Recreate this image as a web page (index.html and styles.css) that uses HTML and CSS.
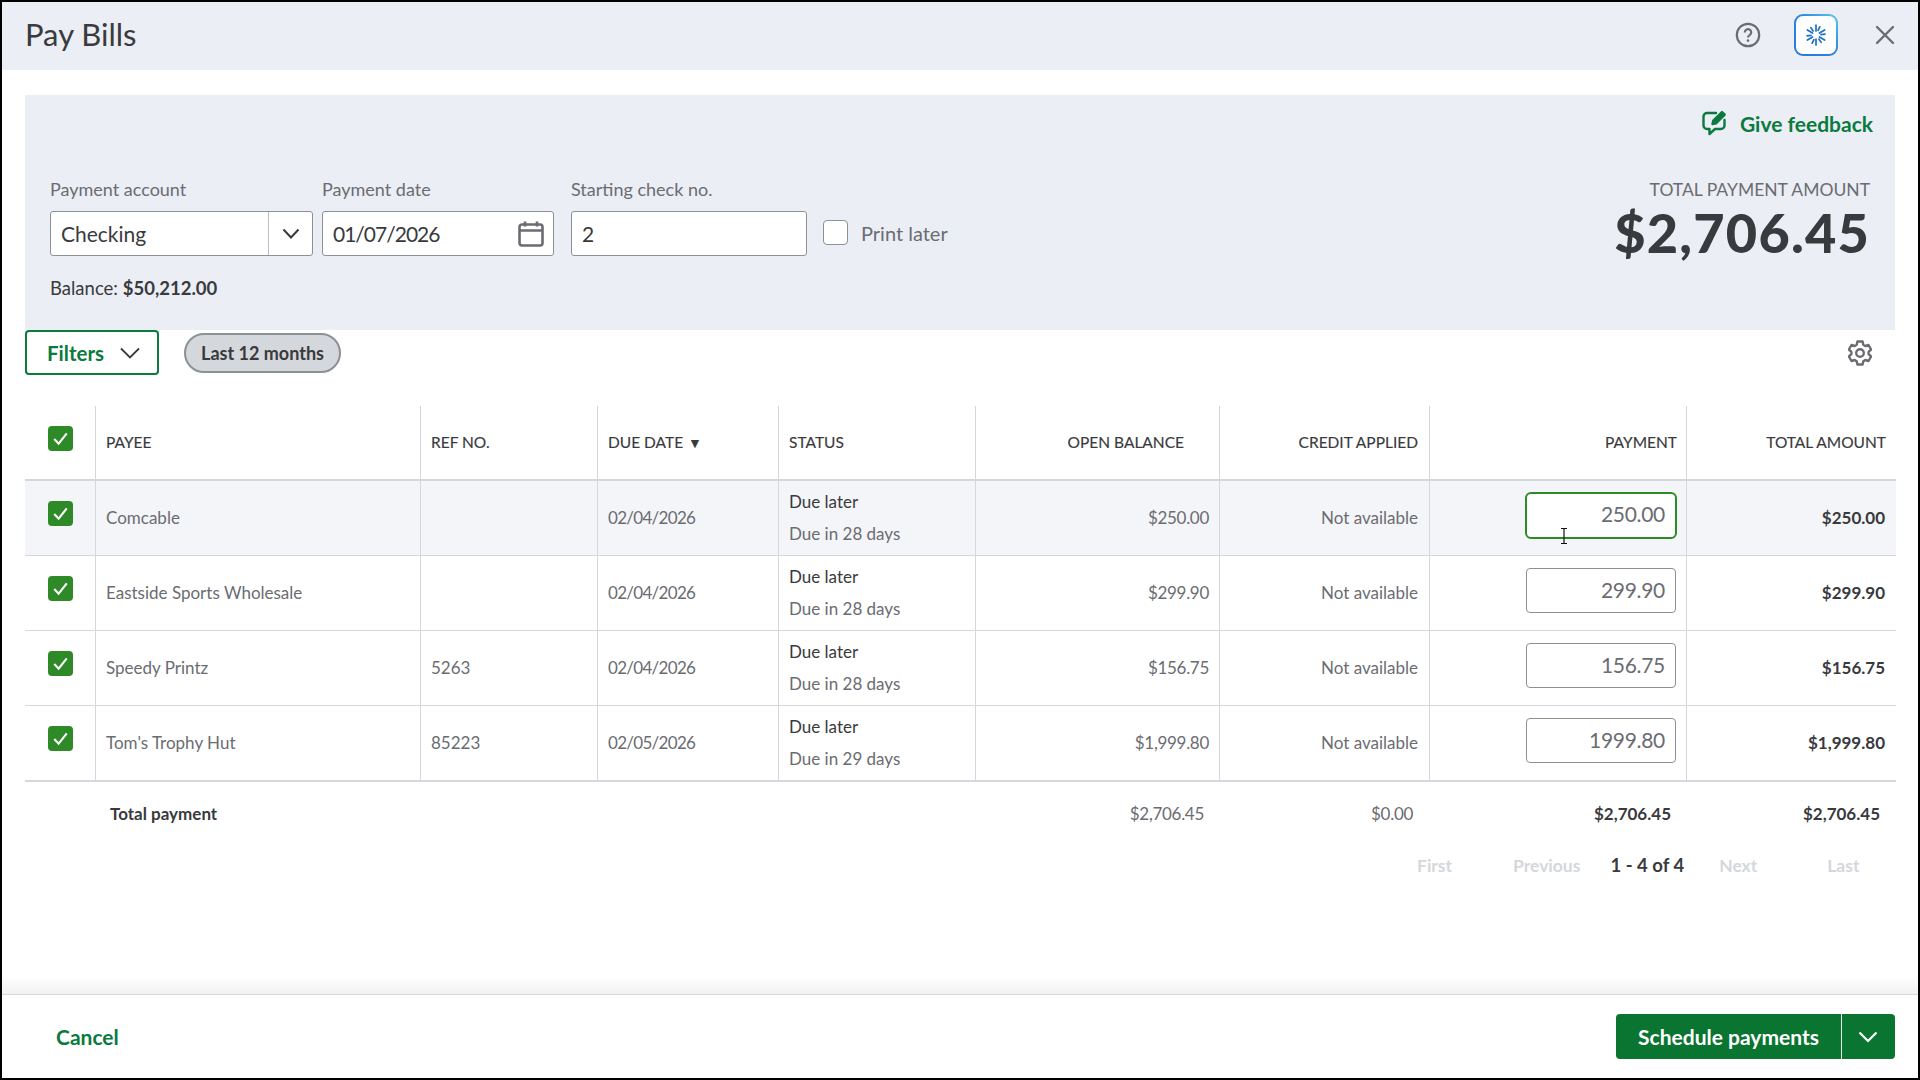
FILE: index.html
```html
<!DOCTYPE html>
<html lang="en">
<head>
<meta charset="utf-8">
<title>Pay Bills</title>
<link rel="stylesheet" href="styles.css">
</head>
<body>
<div class="app">
  <header class="topbar">
    <h1 class="title">Pay Bills</h1>
    <div class="top-actions">
      <svg class="ic-help" viewBox="0 0 26 26"><circle cx="13" cy="13" r="11.2" fill="none" stroke="#6b6c72" stroke-width="2.2"/><path d="M9.800 10.400a3.200 3.200 0 1 1 4.900 2.700c-1.100.7-1.700 1.200-1.700 2.500" fill="none" stroke="#6b6c72" stroke-width="2.200"/><circle cx="13" cy="18.600" r="1.300" fill="#6b6c72"/></svg>
      <div class="ai-btn">
        <svg class="ic-ai" viewBox="0 0 22 22" fill="none" stroke="#1f6fc4" stroke-width="1.700" stroke-linecap="round"><path d="M11 7V1M14.460 9l5.200-3M14.460 13l5.200 3M11 15v6M7.540 13l-5.200 3M7.540 9l-5.200-3M13.100 6.470l1.700-3.630M15.980 10.560l3.980-.36M13.870 15.100l2.290 3.270M8.900 15.530l-1.700 3.630M6.020 11.440l-3.980.34M8.130 6.900L5.840 3.630"/></svg>
      </div>
      <svg class="ic-close" viewBox="0 0 20 20"><path d="M2 2l16 16M18 2L2 18" stroke="#6b6c72" stroke-width="2.400" fill="none" stroke-linecap="round"/></svg>
    </div>
  </header>

  <main class="content">
    <section class="panel">
      <div class="feedback-row">
        <a class="feedback">
          <svg class="ic-fb" viewBox="0 0 26 26" fill="none" stroke="#0a7a3e" stroke-width="2.400" stroke-linecap="round" stroke-linejoin="round"><path d="M14 3H5a3.500 3.500 0 0 0-3.500 3.500v9A3.500 3.500 0 0 0 5 19h2.500v5l5.500-5h6a3.500 3.500 0 0 0 3.500-3.500V10"/><path d="M10.500 14l.8-3.400L20 2l2.700 2.700-8.700 8.600z" fill="#0a7a3e"/></svg>
          <span>Give feedback</span>
        </a>
      </div>
      <div class="form-row">
        <div class="fields">
          <div class="field f-account">
            <label class="label">Payment account</label>
            <div class="box select"><span class="val">Checking</span><span class="sel-arrow"><svg class="chev" viewBox="0 0 18 11"><path d="M1.500 1.500L9 9.500l7.500-8" fill="none" stroke="#393a3d" stroke-width="2"/></svg></span></div>
          </div>
          <div class="field f-date">
            <label class="label">Payment date</label>
            <div class="box date"><span class="val tight">01/07/2026</span>
              <svg class="ic-cal" viewBox="0 0 26 26" fill="none" stroke="#6b6c72" stroke-width="2.600"><rect x="1.500" y="3.500" width="23" height="21" rx="2.500"/><path d="M1.500 9.500h23M7 .5v5M19 .5v5"/></svg>
            </div>
          </div>
          <div class="field f-check">
            <label class="label">Starting check no.</label>
            <div class="box"><span class="val">2</span></div>
          </div>
          <div class="print-later"><span class="cb-empty"></span><span>Print later</span></div>
        </div>
        <div class="total-block">
          <div class="total-label">TOTAL PAYMENT AMOUNT</div>
          <div class="total-value">$2,706.45</div>
        </div>
      </div>
      <div class="balance">Balance: <b>$50,212.00</b></div>
    </section>

    <div class="filter-row">
      <div class="filter-left">
        <button class="filters">Filters <svg class="chev-f" viewBox="0 0 20 12"><path d="M1 1.500l9 9 9-9" fill="none" stroke="#393a3d" stroke-width="1.800"/></svg></button>
        <span class="chip">Last 12 months</span>
      </div>
      <svg class="ic-gear" viewBox="0 0 24 26" fill="none" stroke="#6b6c72" stroke-width="2.400" stroke-linejoin="round"><path d="M9.400 1.500h5.200l.7 3.300 2 1.200 3.200-1 2.600 4.500-2.500 2.300v2.400l2.500 2.300-2.600 4.500-3.200-1-2 1.200-.7 3.300H9.400l-.7-3.300-2-1.200-3.200 1-2.600-4.500L3.400 14.200v-2.400L.9 9.500l2.600-4.500 3.200 1 2-1.200z"/><circle cx="12" cy="13" r="3.800"/></svg>
    </div>

    <table class="grid">
      <colgroup>
        <col class="c1"><col class="c2"><col class="c3"><col class="c4"><col class="c5"><col class="c6"><col class="c7"><col class="c8"><col class="c9">
      </colgroup>
      <thead>
        <tr>
          <th class="cb-cell"><span class="cb"><svg viewBox="0 0 24 24"><path d="M6 12.500l4.200 4.500L18 7" fill="none" stroke="#fff" stroke-width="2"/></svg></span></th>
          <th>PAYEE</th>
          <th>REF NO.</th>
          <th>DUE DATE <span class="sort">▼</span></th>
          <th>STATUS</th>
          <th class="r pad-open">OPEN BALANCE</th>
          <th class="r">CREDIT APPLIED</th>
          <th class="r pad-pay">PAYMENT</th>
          <th class="r">TOTAL AMOUNT</th>
        </tr>
      </thead>
      <tbody>
        <tr class="hl">
          <td class="cb-cell"><span class="cb"><svg viewBox="0 0 24 24"><path d="M6 12.500l4.200 4.500L18 7" fill="none" stroke="#fff" stroke-width="2"/></svg></span></td>
          <td>Comcable</td><td></td><td class="due">02/04/2026</td>
          <td class="status"><div class="st1">Due later</div><div>Due in 28 days</div></td>
          <td class="r money">$250.00</td><td class="r">Not available</td>
          <td class="r pay"><div class="amt focus">250.00</div></td>
          <td class="r strong">$250.00</td>
        </tr>
        <tr>
          <td class="cb-cell"><span class="cb"><svg viewBox="0 0 24 24"><path d="M6 12.500l4.200 4.500L18 7" fill="none" stroke="#fff" stroke-width="2"/></svg></span></td>
          <td>Eastside Sports Wholesale</td><td></td><td class="due">02/04/2026</td>
          <td class="status"><div class="st1">Due later</div><div>Due in 28 days</div></td>
          <td class="r money">$299.90</td><td class="r">Not available</td>
          <td class="r pay"><div class="amt">299.90</div></td>
          <td class="r strong">$299.90</td>
        </tr>
        <tr>
          <td class="cb-cell"><span class="cb"><svg viewBox="0 0 24 24"><path d="M6 12.500l4.200 4.500L18 7" fill="none" stroke="#fff" stroke-width="2"/></svg></span></td>
          <td>Speedy Printz</td><td>5263</td><td class="due">02/04/2026</td>
          <td class="status"><div class="st1">Due later</div><div>Due in 28 days</div></td>
          <td class="r money">$156.75</td><td class="r">Not available</td>
          <td class="r pay"><div class="amt">156.75</div></td>
          <td class="r strong">$156.75</td>
        </tr>
        <tr class="last">
          <td class="cb-cell"><span class="cb"><svg viewBox="0 0 24 24"><path d="M6 12.500l4.200 4.500L18 7" fill="none" stroke="#fff" stroke-width="2"/></svg></span></td>
          <td>Tom's Trophy Hut</td><td>85223</td><td class="due">02/05/2026</td>
          <td class="status"><div class="st1">Due later</div><div>Due in 29 days</div></td>
          <td class="r money">$1,999.80</td><td class="r">Not available</td>
          <td class="r pay"><div class="amt">1999.80</div></td>
          <td class="r strong">$1,999.80</td>
        </tr>
      </tbody>
      <tfoot>
        <tr>
          <td></td>
          <td class="tot-name" colspan="4">Total payment</td>
          <td class="r money">$2,706.45</td>
          <td class="r money pad-credit">$0.00</td>
          <td class="r strong">$2,706.45</td>
          <td class="r strong pad-last">$2,706.45</td>
        </tr>
      </tfoot>
    </table>

    <nav class="pager">
      <span class="pg p-first">First</span>
      <span class="pg p-prev">Previous</span>
      <span class="pg-cur">1 - 4 of 4</span>
      <span class="pg p-next">Next</span>
      <span class="pg p-last">Last</span>
    </nav>
  </main>

  <footer class="footer">
    <a class="cancel">Cancel</a>
    <div class="split">
      <span class="split-main">Schedule payments</span>
      <span class="split-arrow"><svg viewBox="0 0 20 12"><path d="M1.500 1.500L10 10l8.500-8.500" fill="none" stroke="#fff" stroke-width="2.200"/></svg></span>
    </div>
  </footer>
  <svg class="ibeam" viewBox="0 0 8 16"><path d="M1 .5h6M4 .5v15M1 15.500h6" stroke="#111" stroke-width="1.200" fill="none"/></svg>
</div>
</body>
</html>
```

FILE: styles.css
```css
* { box-sizing: border-box; }
html, body { margin: 0; padding: 0; background: #000; }
body { font-family: "Lato", "Noto Sans", sans-serif; color: #393a3d; }
.app {
  position: relative;
  width: 1920px; height: 1080px;
  border: 2px solid #000;
  background: #fff;
  display: flex; flex-direction: column;
  overflow: hidden;
}
.topbar {
  height: 68px; flex: none;
  background: #eceef5;
  display: flex; align-items: center; justify-content: space-between;
  padding: 0 0 2px 23px;
}
.title { margin: 0 0 3px; font-size: 31px; font-weight: 400; color: #393a3d; }
.top-actions { display: flex; align-items: center; }
.ic-help { width: 26px; height: 26px; margin-right: 33px; }
.ai-btn {
  width: 44px; height: 42px; border-radius: 9px;
  border: 2px solid transparent;
  background: linear-gradient(#fff, #fff) padding-box, linear-gradient(to bottom left, #5cc8ee, #2f86dc 45%, #2a78d8) border-box;
  display: flex; align-items: center; justify-content: center;
  margin-right: 37px;
}
.ic-ai { width: 22px; height: 22px; }
.ic-close { width: 20px; height: 20px; margin-right: 23px; }

.content { flex: 1; padding: 25px 23px 0; position: relative; min-height: 0; }
.content::after {
  content: ""; position: absolute; left: 0; right: 0; bottom: 0; height: 18px;
  background: linear-gradient(to bottom, rgba(0,0,0,0), rgba(0,0,0,.05));
}
.panel { height: 235px; background: #eceef5; padding: 0 25px; }
.feedback-row { display: flex; justify-content: flex-end; padding-top: 13px; height: 82px; }
.feedback { display: flex; align-items: center; gap: 12px; color: #0a7a3e; font-size: 21px; font-weight: 700; height: 30px; margin-right: -3px; }
.ic-fb { width: 26px; height: 26px; }
.form-row { display: flex; justify-content: space-between; }
.fields { display: flex; align-items: flex-start; }
.field { display: flex; flex-direction: column; }
.label { font-size: 18px; color: #6b6c72; height: 34px; line-height: 24px; }
.box {
  height: 45px; background: #fff; border: 1px solid #8d9096; border-radius: 3px;
  display: flex; align-items: center; padding-left: 10px;
  font-size: 21px; color: #393a3d;
}
.tight { letter-spacing: -1px; }
.f-account { width: 263px; margin-right: 9px; }
.f-date { width: 232px; margin-right: 17px; }
.f-check { width: 236px; margin-right: 16px; }
.select { padding-right: 0; justify-content: space-between; }
.sel-arrow { width: 44px; height: 43px; border-left: 1px solid #babec5; display: flex; align-items: center; justify-content: center; }
.chev { width: 18px; height: 11px; }
.date { justify-content: space-between; padding-right: 9px; }
.ic-cal { width: 26px; height: 26px; }
.print-later { display: flex; align-items: center; gap: 13px; font-size: 20px; color: #6b6c72; margin-top: 34px; height: 43px; }
.cb-empty { width: 25px; height: 25px; background: #fff; border: 1px solid #8d9096; border-radius: 4px; }
.total-block { text-align: right; }
.total-label { font-size: 17.500px; color: #6b6c72; line-height: 24px; height: 24px; margin-top: 1px; }
.total-value { font-size: 54px; font-weight: 900; letter-spacing: 1.200px; color: #393a3d; line-height: 62px; }
.balance { font-size: 18.500px; color: #393a3d; margin-top: 12px; line-height: 24px; }
.balance b { font-weight: 700; }

.filter-row { display: flex; justify-content: space-between; align-items: center; height: 45px; padding-right: 23px; }
.filter-left { display: flex; align-items: center; gap: 25px; }
.filters {
  width: 134px; height: 45px; background: #fff; border: 2px solid #0a7a3e; border-radius: 4px;
  font: 700 20.500px "Lato", sans-serif; color: #0a7a3e;
  display: flex; align-items: center; justify-content: space-between; padding: 0 17px 0 20px;
}
.chev-f { width: 20px; height: 12px; }
.chip {
  width: 157px; height: 40px; border-radius: 20px; background: #d4d7dc; border: 2px solid #8d9096;
  font-size: 18px; font-weight: 700; color: #393a3d;
  display: flex; align-items: center; justify-content: center;
}
.ic-gear { width: 24px; height: 26px; }

.grid { width: 1871px; table-layout: fixed; border-collapse: separate; border-spacing: 0; margin-top: 31px; font-size: 17px; color: #6b6c72; }
.c1 { width: 71px; } .c2 { width: 325px; } .c3 { width: 177px; } .c4 { width: 181px; } .c5 { width: 197px; }
.c6 { width: 244px; } .c7 { width: 210px; } .c8 { width: 257px; } .c9 { width: 209px; }
.grid th, .grid td { padding: 0 10px; text-align: left; border-right: 1px solid #d4d7dc; border-bottom: 1px solid #d4d7dc; }
.grid th:last-child, .grid td:last-child { border-right: 0; }
.grid th { height: 75px; font-size: 15.500px; font-weight: 400; color: #393a3d; border-bottom: 2px solid #d4d7dc; -webkit-text-stroke: .15px #393a3d; padding-bottom: 2px; }
.grid tbody td { height: 75px; padding-bottom: 2px; }
.grid tbody td.status { padding-bottom: 0; }
.grid tbody tr.last td { border-bottom: 2px solid #d4d7dc; height: 76px; }
.hl td { background: #f4f5f8; }
.grid th.r, .grid td.r { text-align: right; }
.grid th.pad-open { padding-right: 35px; }
.grid th.pad-pay { padding-right: 9px; }
.grid tbody td:nth-child(7), .grid th:nth-child(7) { padding-right: 11px; }
.grid tbody td:last-child { padding-right: 11px; }
.sort { font-size: 14px; margin-left: 1px; }
.due { letter-spacing: -.7px; }
.money { letter-spacing: -.3px; }
.grid .cb-cell { padding: 0 0 0 23px; vertical-align: top; }
.cb { display: block; width: 25px; height: 25px; border-radius: 4px; background: #2e8a27; }
.cb svg { display: block; width: 25px; height: 25px; }
.cb-cell .cb { margin-top: 20px; }
.status { line-height: 32px; }
.st1 { color: #393a3d; }
.grid tbody td.pay { padding: 12px 10px 0 0; vertical-align: top; }
.amt {
  width: 150px; height: 45px; margin-left: auto; background: #fff; border: 1px solid #8d9096; border-radius: 4px;
  font-size: 21px; color: #6b6c72; text-align: right; padding-right: 10px; line-height: 41px; letter-spacing: -.3px;
}
.amt.focus { width: 152px; height: 47px; margin: -1px -1px 0 auto; border: 2.500px solid #2e8a27; border-radius: 6px; line-height: 40px; }
.strong { font-weight: 700; color: #393a3d; }
.grid tfoot td { height: 62px; border: 0; padding-right: 16px; color: #6b6c72; }
.grid tfoot td.pad-credit { padding-right: 17px; }
.grid tfoot td.strong { color: #393a3d; }
.grid tfoot td.pad-last { padding-right: 16px; }
.grid tfoot td.tot-name { font-weight: 700; color: #393a3d; padding-left: 14px; }

.pager { display: flex; align-items: center; height: 42px; font-size: 17.500px; font-weight: 700; }
.pg { color: #d4d7dc; }
.pg-cur { color: #393a3d; font-size: 18.500px; }
.p-first { margin-left: 1392px; }
.p-prev { margin-left: 61px; }
.pg-cur { margin-left: 30px; }
.p-next { margin-left: 35px; }
.p-last { margin-left: 70px; }

.footer {
  height: 84px; flex: none; border-top: 1px solid #d4d7dc; background: #fff;
  display: flex; align-items: center; justify-content: space-between;
  padding: 0 23px 0 54px;
}
.cancel { font-size: 21px; font-weight: 700; color: #0a7a3e; }
.split { display: flex; height: 45px; border-radius: 4px; overflow: hidden; background: #0a7531; color: #fff; font-size: 21px; font-weight: 700; }
.split-main { width: 226px; display: flex; align-items: center; justify-content: center; border-right: 1px solid #e8f0ea; }
.split-arrow { width: 53px; display: flex; align-items: center; justify-content: center; }
.split-arrow svg { width: 20px; height: 12px; margin-right: 2px; }
.ibeam { position: absolute; left: 1558px; top: 526px; width: 8px; height: 16px; }
```
